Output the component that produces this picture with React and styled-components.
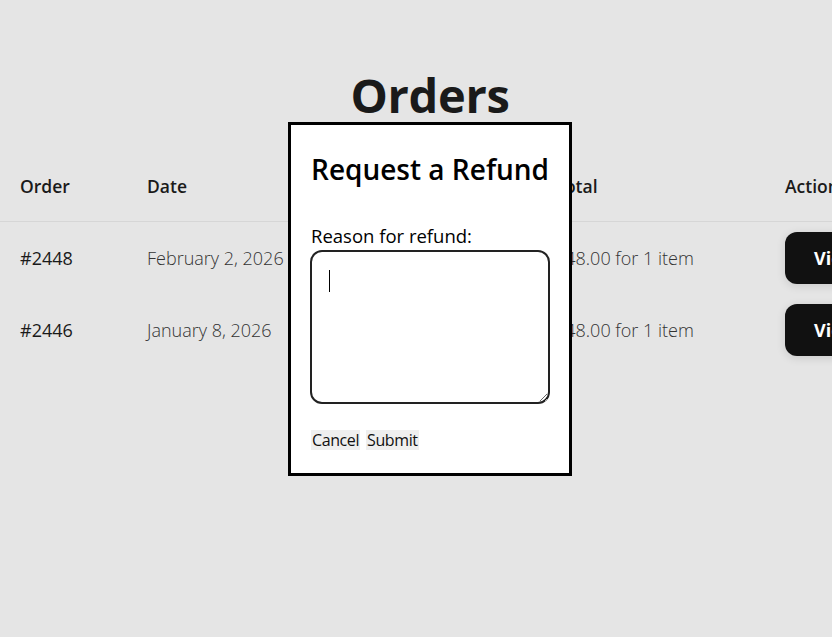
import { useEffect, useRef } from 'react';
import styled, { createGlobalStyle } from 'styled-components';

const GlobalStyle = createGlobalStyle`
  html, body {
    margin: 0;
    padding: 0;
    background: #e5e5e5;
    overflow: hidden;
  }
  body {
    font-family: "Open Sans", "Noto Sans", sans-serif;
    color: #1a1a1a;
  }
`;

const Page = styled.div`
  width: 860px;
  position: relative;
  min-height: 637px;
`;

const Heading = styled.h1`
  margin: 0;
  padding-top: 64px;
  height: 151px;
  box-sizing: border-box;
  text-align: center;
  font-size: 47px;
  line-height: 62px;
  font-weight: 700;
  color: #1a1a1a;
  letter-spacing: -0.3px;
`;

const Grid = styled.div`
  display: grid;
  grid-template-columns: 127px 203px 205px 230px 1fr;
`;

const HeadCell = styled.div`
  height: 70px;
  padding-left: 20px;
  display: flex;
  align-items: center;
  font-size: 17.5px;
  font-weight: 600;
  color: #1a1a1a;
  border-bottom: 1px solid #d6d6d6;
  white-space: nowrap;
`;

const Cell = styled.div`
  height: 72px;
  padding-left: 20px;
  display: flex;
  align-items: center;
  font-size: 18px;
  font-weight: ${p => (p.$light ? 300 : 400)};
  color: ${p => (p.$light ? '#333' : '#1a1a1a')};
  white-space: nowrap;
`;

const ViewButton = styled.button`
  height: 52px;
  padding: 0 29px;
  border: none;
  border-radius: 12px;
  background: #111;
  color: #fff;
  font-family: inherit;
  font-size: 18px;
  font-weight: 700;
  box-shadow: 0 2px 10px rgba(0, 0, 0, 0.12);
`;

const Modal = styled.div`
  position: absolute;
  left: 288px;
  top: 122px;
  width: 284px;
  height: 354px;
  box-sizing: border-box;
  border: 3px solid #000;
  background: #fff;
  padding: 20px;
  display: flex;
  flex-direction: column;
`;

const ModalTitle = styled.h2`
  margin: 4px 0 0;
  font-size: 28px;
  line-height: 40px;
  font-weight: 600;
  color: #000;
  white-space: nowrap;
`;

const Label = styled.label`
  margin-top: 35px;
  font-size: 18.5px;
  line-height: 24px;
  color: #000;
`;

const Field = styled.div`
  position: relative;
  margin: 2px 0 0 -1px;
  width: 240px;
  height: 154px;

  /* text caret of the focused field */
  &::after {
    content: '';
    position: absolute;
    left: 19px;
    top: 20px;
    width: 1px;
    height: 22px;
    background: #000;
    pointer-events: none;
  }
`;

const TextArea = styled.textarea`
  display: block;
  width: 100%;
  height: 100%;
  box-sizing: border-box;
  border: 2px solid #222;
  border-radius: 12px;
  padding: 16px 17px;
  font-family: inherit;
  font-size: 18px;
  line-height: 26px;
  resize: vertical;
  outline: none;
  caret-color: transparent;
`;

const Actions = styled.div`
  margin-top: 26px;
  display: flex;
  gap: 6px;
`;

const PlainButton = styled.button`
  border: none;
  background: #efefef;
  padding: 0 1px;
  height: 20px;
  font-family: inherit;
  font-size: 16px;
  line-height: 20px;
  letter-spacing: -0.4px;
  color: #111;
`;

const orders = [
  { id: '#2448', date: 'February 2, 2026', status: 'Processing', total: '$48.00 for 1 item' },
  { id: '#2446', date: 'January 8, 2026', status: 'Completed', total: '$48.00 for 1 item' },
];

export default function App() {
  const reasonRef = useRef(null);

  useEffect(() => {
    if (reasonRef.current) reasonRef.current.focus();
  }, []);

  return (
    <>
      <GlobalStyle />
      <Page>
        <Heading>Orders</Heading>
        <Grid>
          <HeadCell>Order</HeadCell>
          <HeadCell>Date</HeadCell>
          <HeadCell>Status</HeadCell>
          <HeadCell>Total</HeadCell>
          <HeadCell>Actions</HeadCell>
          {orders.map(o => [
            <Cell key={o.id + 'a'}>{o.id}</Cell>,
            <Cell key={o.id + 'b'} $light>{o.date}</Cell>,
            <Cell key={o.id + 'c'} $light>{o.status}</Cell>,
            <Cell key={o.id + 'd'} $light>{o.total}</Cell>,
            <Cell key={o.id + 'e'}><ViewButton>View</ViewButton></Cell>,
          ])}
        </Grid>
        <Modal>
          <ModalTitle>Request a Refund</ModalTitle>
          <Label htmlFor="reason">Reason for refund:</Label>
          <Field>
            <TextArea id="reason" ref={reasonRef} />
          </Field>
          <Actions>
            <PlainButton>Cancel</PlainButton>
            <PlainButton>Submit</PlainButton>
          </Actions>
        </Modal>
      </Page>
    </>
  );
}
